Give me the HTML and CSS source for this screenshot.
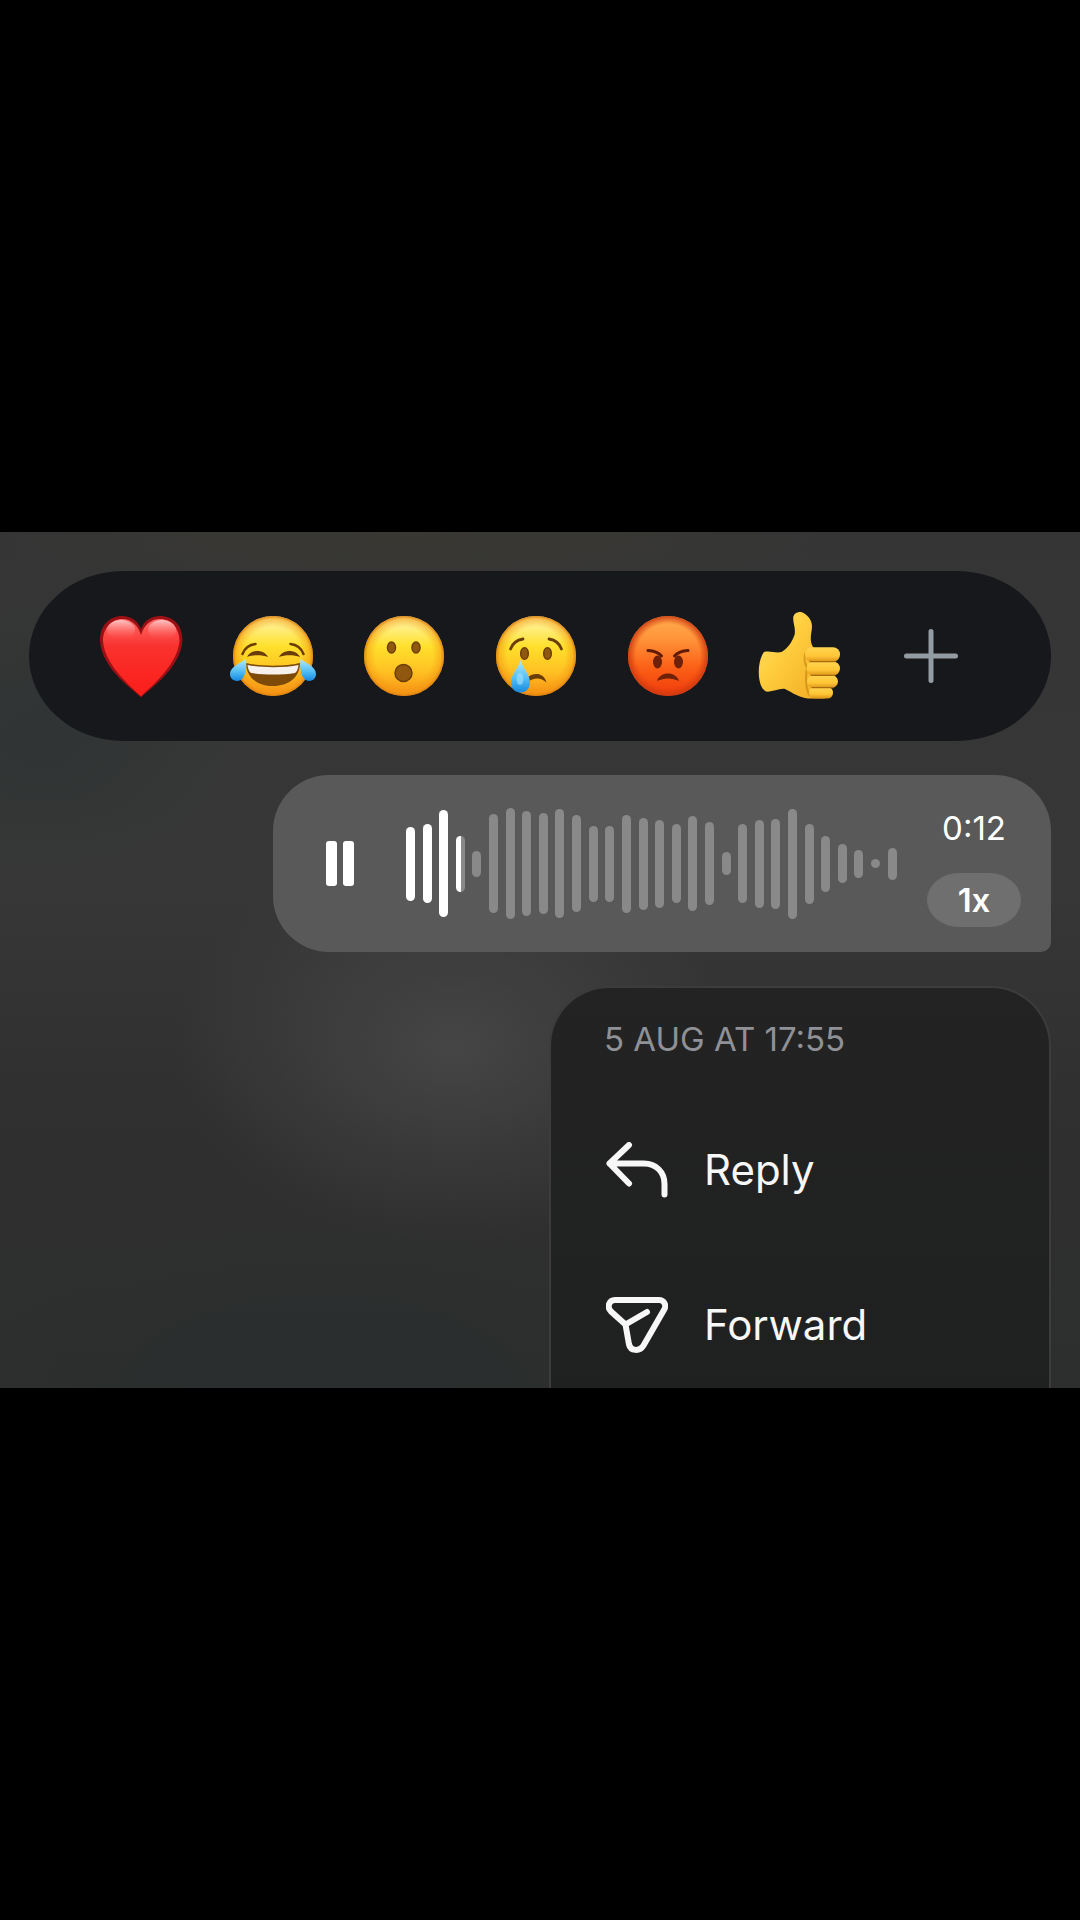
FILE: index.html
```html
<!DOCTYPE html>
<html lang="en">
<head>
    <meta charset="UTF-8">
    <meta name="viewport" content="width=device-width, initial-scale=1.0">
    <title>Voice message</title>
    <link rel="stylesheet" href="styles.css">
</head>
<body>
    <main class="stage">
        <div class="reactions">
            <button class="reaction" type="button" aria-label="Love">
                <svg class="emoji" viewBox="0 0 88 88">
                    <defs>
                        <linearGradient id="heartFill" x1="0" y1="0" x2="0" y2="1">
                            <stop offset="0" stop-color="#ff6a66"/>
                            <stop offset="0.35" stop-color="#f9322f"/>
                            <stop offset="1" stop-color="#fb1d18"/>
                        </linearGradient>
                        <linearGradient id="heartShine" x1="0" y1="0" x2="0" y2="1">
                            <stop offset="0" stop-color="#ffd0d0" stop-opacity="0.9"/>
                            <stop offset="1" stop-color="#ff5a58" stop-opacity="0"/>
                        </linearGradient>
                    </defs>
                    <path d="M44 85.500C40 80 4 58 3 28C3 13 13 4 25 4C34 4 41 9 44 17C47 9 54 4 63 4C76 4 85.500 13 85.500 28C84 58 48 80 44 85.500Z" fill="#9c1015"/>
                    <path d="M44 84.500C40 79 8 56 6 29C6 16 15 7 25 7C34 7 41 13 44 23C47 13 54 7 63 7C74 7 82.500 16 82.500 29C80 56 48 79 44 84.500Z" fill="url(#heartFill)"/>
                    <ellipse cx="24" cy="18" rx="14" ry="10" fill="url(#heartShine)"/>
                    <ellipse cx="65" cy="18" rx="14" ry="10" fill="url(#heartShine)"/>
                </svg>
            </button>
            <button class="reaction" type="button" aria-label="Laugh">
                <svg class="emoji" viewBox="0 0 88 88">
                    <defs>
                        <linearGradient id="faceFill" x1="0" y1="0" x2="0" y2="1">
                            <stop offset="0" stop-color="#fff3a0"/>
                            <stop offset="0.12" stop-color="#fff08a"/>
                            <stop offset="0.38" stop-color="#ffe02c"/>
                            <stop offset="0.7" stop-color="#ffc022"/>
                            <stop offset="1" stop-color="#f78f15"/>
                        </linearGradient>
                        <radialGradient id="faceEdge">
                            <stop offset="0.72" stop-color="#f09a10" stop-opacity="0"/>
                            <stop offset="0.92" stop-color="#f29512" stop-opacity="0.5"/>
                            <stop offset="1" stop-color="#d97e10" stop-opacity="0.95"/>
                        </radialGradient>
                        <linearGradient id="tearFill" x1="0" y1="0" x2="0" y2="1">
                            <stop offset="0" stop-color="#b5e8fb"/>
                            <stop offset="0.55" stop-color="#55c0f5"/>
                            <stop offset="1" stop-color="#1788e0"/>
                        </linearGradient>
                    </defs>
                    <circle cx="44" cy="44" r="40" fill="url(#faceFill)"/>
                    <circle cx="44" cy="44" r="40" fill="url(#faceEdge)"/>
                    <path d="M13.500 42Q17 33 26.500 32M61.500 32Q71 33 74.500 42" fill="none" stroke="#6b3d06" stroke-width="2.500" stroke-linecap="round"/>
                    <path d="M18 45C22 37 35 37 39 45C33 42.500 24 42.500 18 45ZM50 45C54 37 67 37 71 45C65 42.500 56 42.500 50 45Z" fill="#6b3d06"/>
                    <path d="M17 51C31 54.500 57 54.500 71 51C71 65 60 74 44 74C28 74 17 65 17 51Z" fill="#7d4a08"/>
                    <path d="M18.500 53C32 56 56 56 69.500 53C69 57 68 59.500 66 61C54 63 34 63 22 61C20 59.500 19 57 18.500 53Z" fill="#f6f1ec"/>
                    <path d="M17 47C18 55 17 62 13.500 66.500C10 71 1 69 1 62C1 55 10 52 17 47Z" fill="url(#tearFill)"/>
                    <path d="M71.500 47C70.500 55 71.500 62 75 66.500C78.500 71 87 69 87 62C87 55 78.500 52 71.500 47Z" fill="url(#tearFill)"/>
                </svg>
            </button>
            <button class="reaction" type="button" aria-label="Surprised">
                <svg class="emoji" viewBox="0 0 88 88">
                    <circle cx="44" cy="44" r="40" fill="url(#faceFill)"/>
                    <circle cx="44" cy="44" r="40" fill="url(#faceEdge)"/>
                    <g fill="#90580f" stroke="#6b3d06" stroke-width="1.500">
                        <ellipse cx="31.500" cy="35.500" rx="4" ry="5.500"/>
                        <ellipse cx="56" cy="35.500" rx="4" ry="5.500"/>
                        <circle cx="43.500" cy="61" r="8.500"/>
                    </g>
                </svg>
            </button>
            <button class="reaction" type="button" aria-label="Sad">
                <svg class="emoji" viewBox="0 0 88 88">
                    <circle cx="44" cy="44" r="40" fill="url(#faceFill)"/>
                    <circle cx="44" cy="44" r="40" fill="url(#faceEdge)"/>
                    <path d="M18.500 37C20.500 31.500 25 28 31 27M57 27C63 28 67.500 31.500 69.500 37" fill="none" stroke="#6b3d06" stroke-width="2.800" stroke-linecap="round"/>
                    <g fill="#90580f" stroke="#6b3d06" stroke-width="1.500">
                        <ellipse cx="32.500" cy="41.500" rx="3.800" ry="5.800"/>
                        <ellipse cx="55.500" cy="41.500" rx="3.800" ry="5.800"/>
                    </g>
                    <path d="M35 66C41 60 52 60 54.500 70.500C49 65.500 43 65.500 37 69Z" fill="#6b3d06"/>
                    <path d="M28.700 48C31 57 38 62 38 70.500C38 76.500 34 80.500 28.500 80.500C23 80.500 19 76.500 19 70.500C19 62 26 57 28.700 48Z" fill="url(#tearFill)"/>
                    <ellipse cx="28" cy="67" rx="3.500" ry="6" fill="#a5e1fb" opacity="0.6"/>
                </svg>
            </button>
            <button class="reaction" type="button" aria-label="Angry">
                <svg class="emoji" viewBox="0 0 88 88">
                    <defs>
                        <linearGradient id="angryFill" x1="0" y1="0" x2="0" y2="1">
                            <stop offset="0" stop-color="#ffae50"/>
                            <stop offset="0.3" stop-color="#ff9238"/>
                            <stop offset="0.65" stop-color="#fb5f16"/>
                            <stop offset="1" stop-color="#ef3a0c"/>
                        </linearGradient>
                        <radialGradient id="angryEdge">
                            <stop offset="0.8" stop-color="#d8380c" stop-opacity="0"/>
                            <stop offset="1" stop-color="#c93a12" stop-opacity="0.9"/>
                        </radialGradient>
                    </defs>
                    <circle cx="44" cy="44" r="40" fill="url(#angryFill)"/>
                    <circle cx="44" cy="44" r="40" fill="url(#angryEdge)"/>
                    <ellipse cx="33.500" cy="50" rx="4.500" ry="6.500" fill="#6e2108"/>
                    <ellipse cx="54.500" cy="50" rx="4.500" ry="6.500" fill="#6e2108"/>
                    <path d="M24 38.500Q33 39 37.500 44M64 38.500Q55 39 50.500 44" fill="none" stroke="#5f1b06" stroke-width="3" stroke-linecap="round"/>
                    <path d="M33 69C36 59 52 59 55 69C48 65.500 40 65.500 33 69Z" fill="#6e2108"/>
                </svg>
            </button>
            <button class="reaction" type="button" aria-label="Thumbs up">
                <svg class="emoji" viewBox="0 0 88 88">
                    <defs>
                        <linearGradient id="handFill" x1="0" y1="0" x2="1" y2="1">
                            <stop offset="0" stop-color="#ffe07a"/>
                            <stop offset="0.4" stop-color="#ffcf40"/>
                            <stop offset="1" stop-color="#f2a922"/>
                        </linearGradient>
                        <linearGradient id="fingerFill" x1="0" y1="0" x2="0" y2="1">
                            <stop offset="0" stop-color="#ffd550"/>
                            <stop offset="0.6" stop-color="#ffc637"/>
                            <stop offset="1" stop-color="#dd9317"/>
                        </linearGradient>
                    </defs>
                    <path d="M9 40C15 38.500 21 41.500 26.500 40C33 36 37 30 39.500 23C41 17 38 11 38.200 6C38.500 2 41.500 0 45.500 0C51.500 1 57.500 8 57 15C56.500 22 54 28 58 35L66 42V80L70 86.500H53C45 86 38 81 30 77C24 76 17 80.500 11 79.500C6 77 3.500 68 3.800 59C4 51 6 44 9 40Z" fill="url(#handFill)"/>
                    <path d="M51 40C48 46 50 52 52 56C50 66 51 78 55 84" fill="none" stroke="#c98714" stroke-width="2" opacity="0.7"/>
                    <rect x="54" y="75" width="24" height="11.500" rx="5.500" fill="url(#fingerFill)"/>
                    <rect x="52" y="63" width="31" height="13" rx="6.500" fill="url(#fingerFill)"/>
                    <rect x="51.500" y="49.500" width="33.500" height="14" rx="7" fill="url(#fingerFill)"/>
                    <rect x="50" y="35.300" width="35" height="14.500" rx="7" fill="url(#fingerFill)"/>
                    <path d="M55 49.700H80M56 63.300H80M57 75.700H78" stroke="#a86c10" stroke-width="1.200" stroke-linecap="round"/>
                </svg>
            </button>
            <button class="reaction" type="button" aria-label="More reactions">
                <svg class="plus" viewBox="0 0 54 54">
                    <path d="M27 2.500V51.500M2.500 27H51.500"/>
                </svg>
            </button>
        </div>

        <div class="voice">
            <button class="pause" type="button" aria-label="Pause"></button>
            <div class="wave">
                <span class="played" style="height: 74px"></span>
                <span class="played" style="height: 79px"></span>
                <span class="played" style="height: 107px"></span>
                <span class="playing" style="height: 56px"></span>
                <span style="height: 26px"></span>
                <span style="height: 99px"></span>
                <span style="height: 111px"></span>
                <span style="height: 105px"></span>
                <span style="height: 101px"></span>
                <span style="height: 109px"></span>
                <span style="height: 97px"></span>
                <span style="height: 76px"></span>
                <span style="height: 76px"></span>
                <span style="height: 98px"></span>
                <span style="height: 92px"></span>
                <span style="height: 88px"></span>
                <span style="height: 79px"></span>
                <span style="height: 95px"></span>
                <span style="height: 83px"></span>
                <span style="height: 23px"></span>
                <span style="height: 79px"></span>
                <span style="height: 88px"></span>
                <span style="height: 90px"></span>
                <span style="height: 110px"></span>
                <span style="height: 80px"></span>
                <span style="height: 56px"></span>
                <span style="height: 39px"></span>
                <span style="height: 28px"></span>
                <span style="height: 9px"></span>
                <span style="height: 32px"></span>
            </div>
            <div class="voice-side">
                <span class="time">0:12</span>
                <button class="speed" type="button">1x</button>
            </div>
        </div>

        <div class="menu">
            <p class="date">5 AUG AT 17:55</p>
            <button class="menu-item" type="button">
                <svg class="menu-icon" viewBox="0 0 62 56">
                    <path d="M23 3L3.500 21.500L23 41.500M3.500 21.500H38C50 21.500 58.500 30 58.500 42V52.500"/>
                </svg>
                Reply
            </button>
            <button class="menu-item" type="button">
                <svg class="menu-icon" viewBox="0 0 62 56">
                    <path d="M9 3H53C58 3 60.500 8 58.500 12L37.500 48.500C33.500 55 24.500 54 23 47.500L19.500 27.500L5 14.500C0.500 10 3 3 9 3ZM19.500 27.500L41 15"/>
                </svg>
                Forward
            </button>
        </div>
    </main>
</body>
</html>
```
FILE: styles.css
```css
* {
    margin: 0;
    padding: 0;
    box-sizing: border-box;
}

body {
    display: flex;
    align-items: center;
    min-height: 100vh;
    background: #000;
    color: #fff;
    font-family: Inter, "Liberation Sans", sans-serif;
}

button {
    border: none;
    background: none;
    color: inherit;
    font-family: inherit;
    cursor: pointer;
}

.stage {
    display: flex;
    flex-direction: column;
    align-items: flex-end;
    gap: 34px;
    width: 100%;
    min-height: 0;
    aspect-ratio: 1080 / 856;
    padding: 39px 29px 0;
    overflow: hidden;
    background:
        radial-gradient(ellipse 280px 200px at 42% 60%, #454545, transparent),
        radial-gradient(ellipse 360px 160px at 30% 100%, #2a2e2e, transparent),
        radial-gradient(ellipse 200px 140px at 4% 24%, #303434, transparent),
        radial-gradient(ellipse 420px 70px at 38% 0%, #393833, transparent),
        linear-gradient(#353535, #373737 40%, #2f2f2f 70%, #2d2e2e);
}

/* Reactions */
.reactions {
    display: flex;
    flex-shrink: 0;
    align-items: center;
    width: 100%;
    height: 170px;
    padding: 0 54px 0 46px;
    border-radius: 94px / 85px;
    background: #17181b;
}

.reaction {
    display: flex;
    flex: 1;
    justify-content: center;
}

.emoji {
    width: 88px;
    height: 88px;
}

.plus {
    width: 54px;
    height: 54px;
    fill: none;
    stroke: #939ba3;
    stroke-width: 5;
    stroke-linecap: round;
}

/* Voice message */
.voice {
    display: flex;
    flex-shrink: 0;
    align-items: center;
    width: 778px;
    max-width: 100%;
    padding: 0 30px 0 53px;
    border-radius: 56px 56px 10px 56px;
    background: #595959;
}

.pause {
    width: 28px;
    height: 45px;
    margin-right: 52px;
    display: flex;
    justify-content: space-between;
}

.pause::before,
.pause::after {
    content: "";
    width: 11px;
    height: 45px;
    border-radius: 3px;
    background: #fff;
}

.wave {
    display: flex;
    flex: 1;
    align-items: center;
    justify-content: space-between;
    margin-right: 30px;
}

.wave span {
    width: 9px;
    border-radius: 5px;
    background: #898989;
}

.wave .played {
    background: #fff;
}

.wave .playing {
    background: linear-gradient(to right, #fff 55%, #898989 55%);
}

.voice-side {
    display: flex;
    flex-direction: column;
    align-items: center;
    gap: 25px;
    padding: 33px 0 25px;
}

.time {
    font-size: 33px;
    line-height: 40px;
}

.speed {
    width: 94px;
    height: 54px;
    border-radius: 32px / 27px;
    background: #6f6f6f;
    font-size: 33px;
    font-weight: 600;
}

/* Context menu */
.menu {
    width: 502px;
    max-width: 100%;
    flex-shrink: 0;
    border: 2px solid #3c3c3c;
    border-bottom: none;
    border-radius: 60px 60px 0 0;
    background: linear-gradient(#232323, #1f2020);
}

.date {
    padding: 31px 53px 33px;
    color: #8f9197;
    font-size: 33px;
    line-height: 40px;
}

.menu-item {
    display: flex;
    align-items: center;
    gap: 36px;
    width: 100%;
    height: 155px;
    padding: 0 55px;
    color: #f7f7f7;
    font-size: 42px;
}

.menu-icon {
    width: 62px;
    height: 56px;
    fill: none;
    stroke: currentColor;
    stroke-width: 6;
    stroke-linecap: round;
    stroke-linejoin: round;
}
```
